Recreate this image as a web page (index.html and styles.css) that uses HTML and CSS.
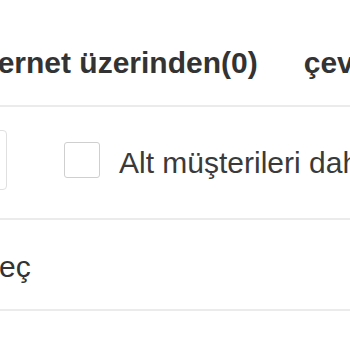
FILE: index.html
```html
<!DOCTYPE html>
<html lang="tr">
<head>
<meta charset="utf-8">
<link rel="stylesheet" href="styles.css">
</head>
<body>
<div class="page">
  <div class="tabs">
    <span class="tab tab-first">İnternet üzerinden(0)</span>
    <span class="tab">çevrimdışı(0)</span>
  </div>
  <div class="filter-row">
    <div class="search-box"></div>
    <span class="checkbox"></span>
    <span class="label">Alt müşterileri dahil et</span>
  </div>
  <div class="select-row">
    <span class="select-text">Seç</span>
  </div>
</div>
</body>
</html>
```
FILE: styles.css
```css
html, body {
  margin: 0;
  padding: 0;
  background: #ffffff;
}
.page {
  width: 350px;
  height: 350px;
  overflow: hidden;
  font-family: "Liberation Sans", Arial, sans-serif;
  font-size: 30px;
  line-height: 30px;
  color: #333333;
}
.tabs {
  display: flex;
  gap: 46px;
  white-space: nowrap;
  padding: 48px 0 27px 0;
  border-bottom: 2px solid #ebebeb;
  margin-left: -39px;
  width: 500px;
  font-weight: bold;
}
.filter-row {
  display: flex;
  align-items: center;
  white-space: nowrap;
  padding: 23px 0 28px 0;
  border-bottom: 2px solid #ebebeb;
  width: 350px;
}
.search-box {
  flex: none;
  width: 60px;
  height: 58px;
  margin-left: -55px;
  border: 1px solid #e0e0e0;
  border-radius: 4px;
}
.checkbox {
  flex: none;
  width: 34px;
  height: 34px;
  margin-left: 57px;
  border: 1px solid #cfcfcf;
  border-radius: 3px;
}
.label {
  margin-left: 19px;
  margin-top: 6px;
  color: #3a3a3a;
}
.select-row {
  padding: 32px 0 27px 0;
  border-bottom: 2px solid #ebebeb;
  white-space: nowrap;
}
.select-text {
  display: inline-block;
  margin-left: -21px;
}
```
